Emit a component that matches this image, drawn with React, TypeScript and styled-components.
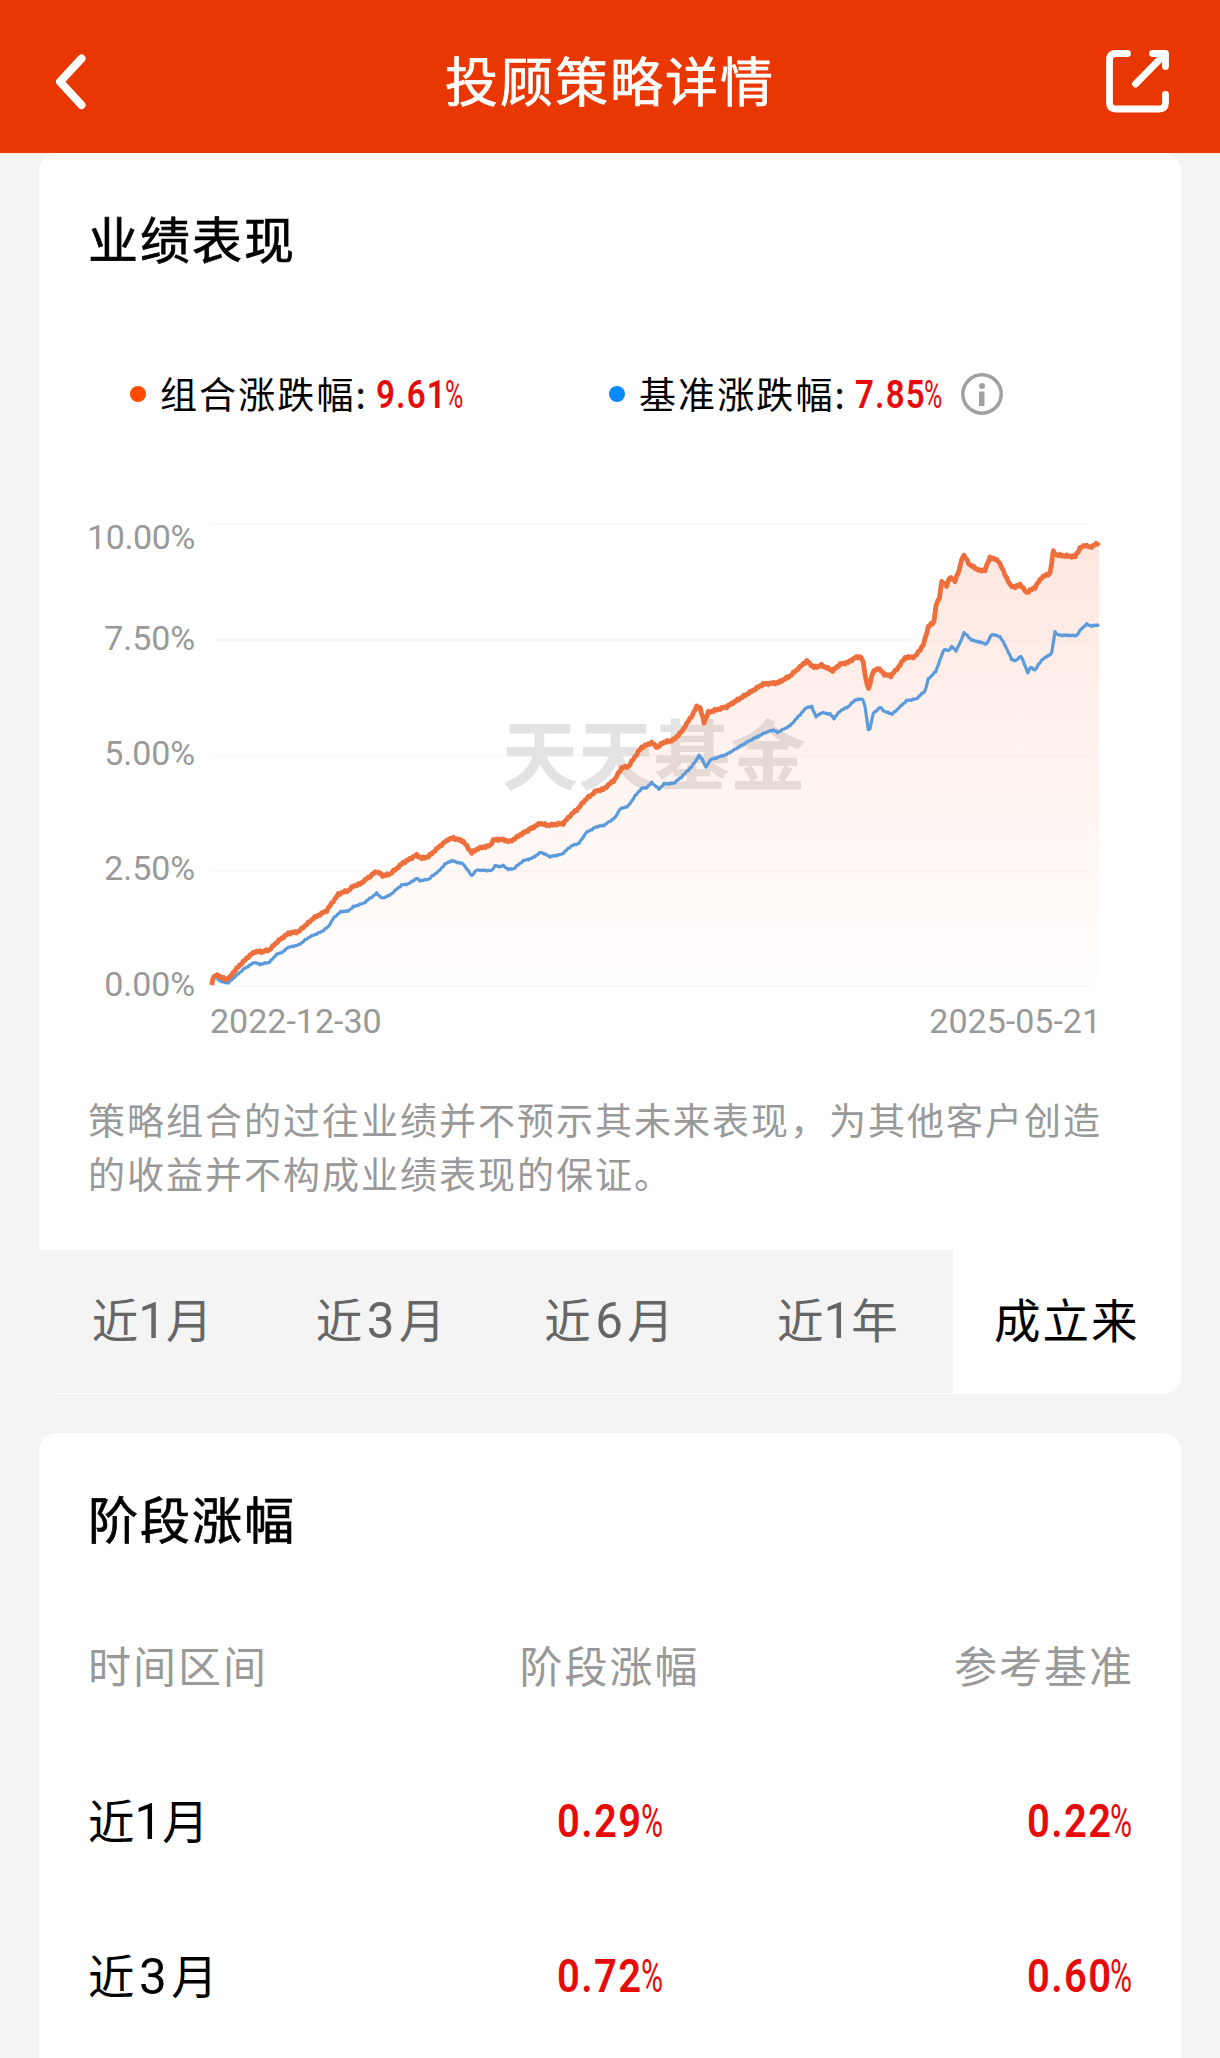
import React from "react";
import styled, { createGlobalStyle } from "styled-components";

const CJK = `"Noto Sans CJK SC", "Noto Sans", sans-serif`;
const LATIN = `Roboto, "Noto Sans CJK SC", sans-serif`;

const GlobalStyle = createGlobalStyle`
  * { box-sizing: border-box; }
  body { margin: 0; background: #f4f4f4; font-family: ${CJK}; color: #000; }
`;

const Page = styled.div`
  width: 1220px;
  height: 2058px;
  overflow: hidden;
  background: #f4f4f4;
`;

const Header = styled.header`
  height: 153px;
  padding: 11px 49px 0 48px;
  background: #e93702;
  color: #fff;
  display: grid;
  grid-template-columns: 70px 1fr 70px;
  align-items: center;
`;

const Title = styled.h1`
  margin: 0;
  text-align: center;
  font-size: 53px;
  line-height: 64px;
  font-weight: 400;
  -webkit-text-stroke: 0.7px currentColor;
  letter-spacing: 2px;
  padding: 0 0 7px 1px;
`;

const IconButton = styled.button<{ $end?: boolean }>`
  border: 0;
  padding: 0;
  background: none;
  color: inherit;
  display: flex;
  justify-content: ${(p) => (p.$end ? "flex-end" : "flex-start")};
`;

const Card = styled.section<{ $height: number; $gap?: number }>`
  height: ${(p) => p.$height}px;
  margin: ${(p) => p.$gap ?? 0}px 39px 0;
  border-radius: 18px;
  background: #fff;
  overflow: hidden;
`;

const Heading = styled.h2`
  margin: 0;
  padding: 54px 49px 0;
  height: 115px;
  font-size: 50px;
  line-height: 60px;
  font-weight: 400;
  -webkit-text-stroke: 0.7px currentColor;
  letter-spacing: 2px;
`;

const Legend = styled.div`
  margin-top: 100px;
  padding-left: 91px;
  height: 52px;
  display: flex;
  align-items: center;
`;

const LegendItem = styled.div<{ $width?: number }>`
  width: ${(p) => (p.$width ? `${p.$width}px` : "auto")};
  display: flex;
  align-items: center;
`;

const Dot = styled.span<{ $color: string }>`
  width: 16px;
  height: 16px;
  margin-right: 14px;
  border-radius: 50%;
  background: ${(p) => p.$color};
`;

const LegendLabel = styled.span`
  font-size: 37px;
  line-height: 52px;
  letter-spacing: 2.1px;
  width: 216px;
  padding-bottom: 3px;
`;

const ValueBox = styled.span<{ $size: number; $drop?: number }>`
  display: inline-flex;
  align-items: baseline;
  padding-top: ${(p) => p.$drop ?? 0}px;
  color: #e60a0a;
  font-family: ${LATIN};
  font-size: ${(p) => p.$size}px;
  line-height: 1.2;
  font-weight: 600;
  letter-spacing: 0;
`;

const Digits = styled.span`
  width: 1.78em;
  white-space: nowrap;
  transform: scaleX(0.85);
  transform-origin: left center;
  letter-spacing: 0.035em;
`;

const Percent = styled.span`
  width: 0.44em;
  font-weight: 400;
  white-space: nowrap;
  transform: scaleX(0.64);
  transform-origin: left center;
`;

const InfoIcon = styled.svg`
  margin-left: 19px;
`;

const Chart = styled.div`
  margin-top: 96px;
  height: 526px;
  padding-left: 41px;
  display: grid;
  grid-template-columns: 120px 904px;
  font-family: ${LATIN};
  font-size: 34px;
  color: #999;
`;

const Axis = styled.div`
  padding-right: 5px;
  display: grid;
  grid-template-rows: 64px repeat(4, 115.3px);
  justify-items: end;
  align-items: center;
  letter-spacing: -0.1px;
`;

const AxisLabel = styled.span<{ $top?: boolean }>`
  line-height: 42px;
  letter-spacing: ${(p) => (p.$top ? "-0.4px" : "inherit")};
  align-self: ${(p) => (p.$top ? "start" : "center")};
`;

const Plot = styled.svg`
  display: block;
`;

const Watermark = styled.text`
  font-family: ${CJK};
  font-size: 76px;
  font-weight: 700;
  fill: #e3e3e3;
`;

const Dates = styled.div`
  display: flex;
  justify-content: space-between;
  padding: 0 3px 0 10px;
  line-height: 42px;
`;

const Note = styled.p`
  margin: 50px 0 0;
  padding-left: 49px;
  width: 1080px;
  height: 158px;
  color: #999;
  font-size: 37px;
  line-height: 54px;
  letter-spacing: 2px;
`;

const Tabs = styled.nav`
  height: 144px;
  display: grid;
  grid-template-columns: repeat(5, 1fr);
  border-bottom: 1px solid #fff;
`;

const Tab = styled.button<{ $active?: boolean }>`
  border: 0;
  padding: 0 0 8px 0;
  background: ${(p) => (p.$active ? "#fff" : "#f4f4f4")};
  color: ${(p) => (p.$active ? "#000" : "#666")};
  font-family: ${CJK};
  font-size: 46.5px;
  letter-spacing: 2px;
`;

const Num = styled.span<{ $narrow: boolean }>`
  font-family: ${LATIN};
  font-size: 1.06em;
  margin: 0 ${(p) => (p.$narrow ? "-2px" : "2.5px")};
`;

const Table = styled.div`
  padding: 0 50px 0 49px;
  margin-top: 41px;
`;

const Row = styled.div<{ $head?: boolean }>`
  height: 155px;
  display: grid;
  grid-template-columns: 1fr 1fr 1fr;
  align-items: center;
  font-size: ${(p) => (p.$head ? 43 : 46.5)}px;
  letter-spacing: 2px;
  color: ${(p) => (p.$head ? "#999" : "#000")};
`;

const Cell = styled.div<{ $align: "start" | "center" | "end"; $lift?: number; $outdent?: number }>`
  display: flex;
  justify-content: ${(p) => p.$align};
  align-items: baseline;
  padding-bottom: ${(p) => p.$lift ?? 0}px;
  margin-right: ${(p) => -(p.$outdent ?? 0)}px;
`;

type Pt = [number, number];

const segment = (ox: number, oy: number, raw: string): Pt[] =>
  raw
    .trim()
    .split(/\s+/)
    .map((p) => {
      const [x, y] = p.split(",").map(Number);
      return [ox + x / 3, oy + y / 3] as Pt;
    });

const portfolio: Pt[] = [
  ...segment(190, 780, `65,615 68,595 78,585 90,590 105,597 118,595 125,583 150,555 175,530 195,515 215,515 238,510 262,485 295,460 325,455 370,415 410,392 425,370 445,343 460,336 475,332 490,318 510,312 545,285 560,274 578,287 600,282 640,248 680,225 695,235 715,230 750,198 775,178 790,174 820,184 835,205 845,218 865,205 900,197 910,180 935,178`),
  ...segment(480, 640, `90,605 120,585 180,550 205,556 250,550 270,527 295,505 315,480 350,452 370,448 405,418 425,383 445,380 465,350 485,322 515,308 533,323 548,308 580,300 605,275 640,220 650,200 660,203 672,247 685,217 740,200 800,163 850,132 895,128 930,108`),
  ...segment(790, 510, `50,453 72,472 95,466 128,482 150,463 175,457 195,443 213,440 220,460 228,510 236,538 248,487 265,474 283,493 302,498 325,472 345,443 375,440 400,405 415,350 432,335 438,285 448,265 455,215 470,228 478,203 495,212 508,180 515,145 522,137 540,165 570,182 585,180 600,142 625,152 640,183 660,225 675,232 690,223 710,248 735,232 755,202 780,190 790,125 800,135 855,140 870,115 885,105 900,112 927,98`),
];

const benchmark: Pt[] = [
  ...segment(190, 780, `65,612 70,596 78,593 95,605 115,608 135,590 160,568 193,547 210,553 238,547 260,523 280,515 292,503 325,495 360,470 395,455 415,440 430,415 452,395 475,393 490,380 520,370 560,340 577,355 600,345 635,315 655,312 680,295 690,302 715,298 750,270 765,252 785,242 820,252 845,287 860,270`),
  ...segment(480, 640, `35,692 45,677 58,680 70,677 85,688 100,687 130,662 155,655 183,637 210,650 245,643 275,617 297,610 318,578 350,560 372,556 405,533 420,507 445,498 465,468 485,445 500,443 515,428 537,447 552,432 580,430 600,415 635,380 657,347 667,358 678,383 690,360 740,343 800,307 855,278 880,270 893,277 930,257`),
  ...segment(790, 510, `50,592 65,590 78,620 95,608 120,612 132,625 150,603 175,590 195,570 218,567 225,590 235,660 240,655 250,610 270,592 285,605 307,612 350,572 378,567 405,543 415,507 437,485 450,450 462,418 475,422 485,410 498,422 512,395 522,368 545,390 590,402 605,373 630,380 645,405 665,448 678,452 693,438 713,487 722,472 735,480 755,450 785,430 795,365 803,375 860,377 875,355 890,343 905,348 927,344`),
];

const toPath = (pts: Pt[], amp: number) => {
  let d = `M${pts[0][0].toFixed(1)} ${pts[0][1].toFixed(1)}`;
  let k = 0;
  for (let i = 1; i < pts.length; i++) {
    const [x0, y0] = pts[i - 1];
    const [x1, y1] = pts[i];
    const n = Math.max(1, Math.round((x1 - x0) / 1.6));
    for (let j = 1; j <= n; j++) {
      k += 1;
      const t = j / n;
      const dy = (k % 2 ? amp : -amp) * (0.6 + 0.4 * Math.sin(k * 1.7));
      d += `L${(x0 + (x1 - x0) * t).toFixed(1)} ${(y0 + (y1 - y0) * t + dy).toFixed(1)}`;
    }
  }
  return d;
};

const portfolioPath = toPath(portfolio, 1);
const benchmarkPath = toPath(benchmark, 0.6);

const Value = ({ children, size = 47, drop }: { children: string; size?: number; drop?: number }) => (
  <ValueBox $size={size} $drop={drop}>
    <Digits>{children}</Digits>
    <Percent>%</Percent>
  </ValueBox>
);

const Period = ({ text }: { text: string }) => {
  const m = text.match(/^(\D+)(\d)(\D+)$/);
  if (!m) return <>{text}</>;
  return (
    <span>
      {m[1]}
      <Num $narrow={m[2] === "1"}>{m[2]}</Num>
      {m[3]}
    </span>
  );
};

const tabs = ["近1月", "近3月", "近6月", "近1年", "成立来"];
const rows = [
  ["近1月", "0.29", "0.22"],
  ["近3月", "0.72", "0.60"],
];

export default function App() {
  return (
    <Page>
      <GlobalStyle />
      <Header>
        <IconButton aria-label="返回">
          <svg width="46" height="64" viewBox="48 50 46 64" fill="none" stroke="currentColor" strokeWidth="8" strokeLinecap="round" strokeLinejoin="round">
            <path d="M81.5 58.5 60 81.7 81.5 105" />
          </svg>
        </IconButton>
        <Title>投顾策略详情</Title>
        <IconButton $end aria-label="分享">
          <svg width="68" height="66" viewBox="1103 48.500 68 66" fill="none" stroke="currentColor" strokeWidth="6.8" strokeLinecap="round" strokeLinejoin="round">
            <path d="M1127.500 53H1116q-6.500 0-6.500 6.500V102q0 6.500 6.500 6.500H1159q6.500 0 6.500-6.500V94" />
            <path d="M1152.500 53H1165.500V66M1164 54.500 1135.500 83.500" />
          </svg>
        </IconButton>
      </Header>

      <Card $height={1241}>
        <Heading>业绩表现</Heading>
        <Legend>
          <LegendItem $width={479}>
            <Dot $color="#ff4b00" />
            <LegendLabel>组合涨跌幅:</LegendLabel>
            <Value size={39} drop={3}>9.61</Value>
          </LegendItem>
          <LegendItem>
            <Dot $color="#0a8aff" />
            <LegendLabel>基准涨跌幅:</LegendLabel>
            <Value size={39} drop={3}>7.85</Value>
            <InfoIcon width="42" height="42" viewBox="0 0 42 42">
              <circle cx="21" cy="21" r="19.200" fill="none" stroke="#a0a0a0" strokeWidth="3.500" />
              <circle cx="21" cy="13" r="3" fill="#a0a0a0" />
              <path d="M18 18.500h5.500V33H18z" fill="#a0a0a0" />
            </InfoIcon>
          </LegendItem>
        </Legend>

        <Chart>
          <Axis>
            <AxisLabel $top>10.00%</AxisLabel>
            <AxisLabel>7.50%</AxisLabel>
            <AxisLabel>5.00%</AxisLabel>
            <AxisLabel>2.50%</AxisLabel>
            <AxisLabel>0.00%</AxisLabel>
          </Axis>
          <div>
            <Plot width="904" height="484" viewBox="200 516 904 484">
              <defs>
                <linearGradient id="fill" gradientUnits="userSpaceOnUse" x1="0" y1="540" x2="0" y2="986">
                  <stop offset="0" stopColor="#ff5a28" stopOpacity="0.15" />
                  <stop offset="1" stopColor="#ff7a40" stopOpacity="0.01" />
                </linearGradient>
              </defs>
              {[524, 640, 755.5, 871, 986].map((y) => (
                <path key={y} d={`M212 ${y}H1090`} stroke="#f9f9f9" strokeWidth="2" />
              ))}
              <Watermark x="502" y="784">天天基金</Watermark>
              <path d={`${portfolioPath}L1099 986L211.700 986Z`} fill="url(#fill)" />
              <path d={benchmarkPath} fill="none" stroke="#5b9adb" strokeWidth="3.200" strokeLinejoin="round" />
              <path d={portfolioPath} fill="none" stroke="#ee6f3c" strokeWidth="4.800" strokeLinejoin="round" />
            </Plot>
            <Dates>
              <span>2022-12-30</span>
              <span>2025-05-21</span>
            </Dates>
          </div>
        </Chart>

        <Note>策略组合的过往业绩并不预示其未来表现，为其他客户创造的收益并不构成业绩表现的保证。</Note>

        <Tabs>
          {tabs.map((t) => (
            <Tab key={t} $active={t === "成立来"}>
              <Period text={t} />
            </Tab>
          ))}
        </Tabs>
      </Card>

      <Card $height={700} $gap={39}>
        <Heading>阶段涨幅</Heading>
        <Table>
          <Row $head>
            <Cell $align="start" $lift={5}>时间区间</Cell>
            <Cell $align="center" $lift={5}>阶段涨幅</Cell>
            <Cell $align="end" $lift={5} $outdent={3}>参考基准</Cell>
          </Row>
          {rows.map(([period, gain, base]) => (
            <Row key={period}>
              <Cell $align="start" $lift={7}>
                <Period text={period} />
              </Cell>
              <Cell $align="center">
                <Value>{gain}</Value>
              </Cell>
              <Cell $align="end">
                <Value>{base}</Value>
              </Cell>
            </Row>
          ))}
        </Table>
      </Card>
    </Page>
  );
}
